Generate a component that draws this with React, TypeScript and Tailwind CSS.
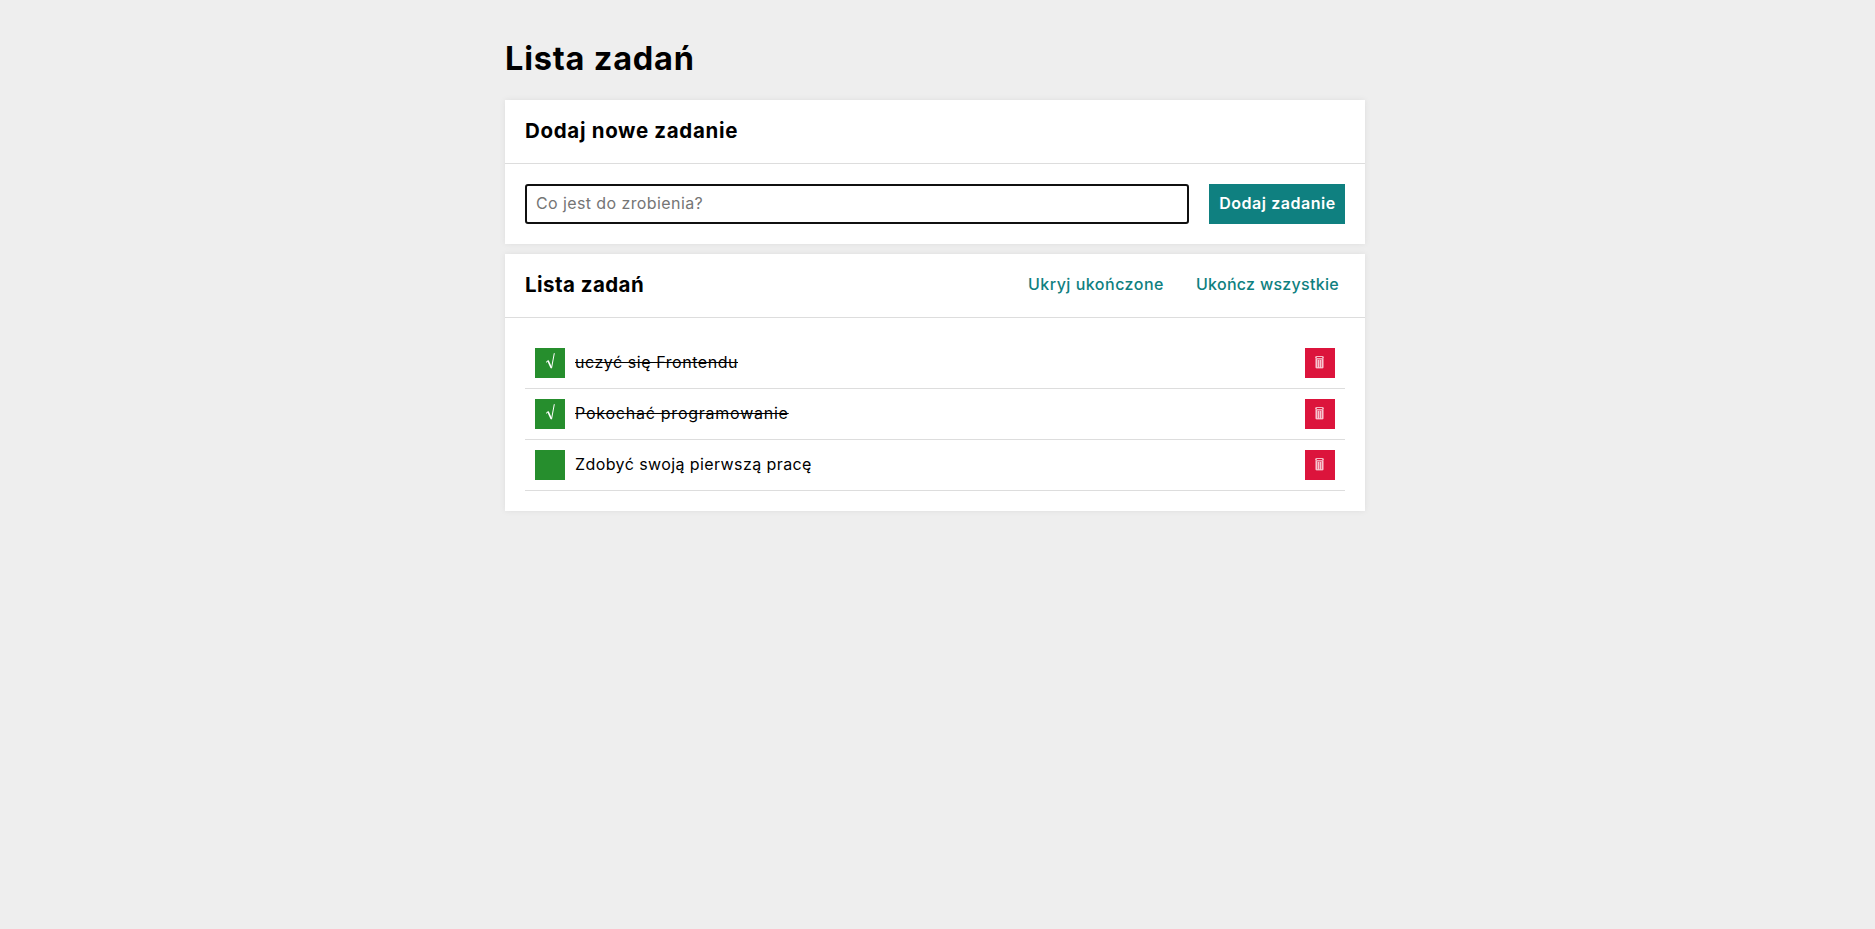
import React from "react";

type Task = { content: string; done: boolean; tracking: string };

const tasks: Task[] = [
  { content: "uczyć się Frontendu", done: true, tracking: "tracking-[0.55px]" },
  { content: "Pokochać programowanie", done: true, tracking: "tracking-[0.76px]" },
  { content: "Zdobyć swoją pierwszą pracę", done: false, tracking: "tracking-[0.41px]" },
];

function CheckIcon() {
  return (
    <svg width="30" height="30" viewBox="0 0 30 30" fill="none" stroke="#fff">
      <path d="M11 14.4 13.2 12.6" strokeWidth="1" />
      <path d="M13 12.6 16.3 19.8" strokeWidth="1.6" />
      <path d="M16.5 20.3 19.3 5.2" strokeWidth="1" />
    </svg>
  );
}

function BinIcon() {
  return (
    <svg width="30" height="30" viewBox="0 0 30 30">
      <path d="M11 8h7v1h-7z" fill="#f6b9c5" />
      <path d="M10 8.5h2v2h-2zM17 8.5h2v2h-2z" fill="#f3a3b3" />
      <path d="M11 10h7v1h-7z" fill="#fbdde3" />
      <path d="M10 10.5h9v9l-1.5 1.3h-6L10 19.5z" fill="#e9708a" />
      <path d="M11.5 11v9M13.5 12v8M15.5 12v8M17.5 11v9" stroke="#f9cfd7" strokeWidth="0.9" />
      <path d="M11 19.5h7" stroke="#f8c8d1" strokeWidth="0.8" />
    </svg>
  );
}

function Section({ title, titleClass, actions, children }: {
  title: string;
  titleClass: string;
  actions?: React.ReactNode;
  children: React.ReactNode;
}) {
  return (
    <section className="mb-2.5 bg-white shadow-[0_0_5px_#dddddd]">
      <header className="flex h-16 items-center justify-between border-b border-[#dddddd] px-5">
        <h2 className={`pb-0.5 text-[20.5px] leading-6 font-bold ${titleClass}`}>{title}</h2>
        {actions}
      </header>
      <div className="p-5">{children}</div>
    </section>
  );
}

export default function App() {
  return (
    <div className="min-h-screen bg-[#eeeeee] font-['Inter',sans-serif] text-base text-black">
      <main className="ml-[505px] w-[860px]">
        <h1 className="flex h-[100px] items-center pt-[18px] text-[32.5px] font-bold tracking-[0.79px]">Lista zadań</h1>

        <Section title="Dodaj nowe zadanie" titleClass="tracking-[0.68px]">
          <form className="flex gap-5" onSubmit={(e) => e.preventDefault()}>
            <input
              className="h-10 min-w-0 grow rounded-[3px] border-2 border-[#101010] px-[9px] pb-0.5 tracking-[0.4px] outline-none placeholder:text-[#757575]"
              placeholder="Co jest do zrobienia?"
            />
            <button className="h-10 w-[136px] bg-[#0f8080] pb-0.5 pl-px font-semibold tracking-[0.55px] whitespace-nowrap text-white">
              Dodaj zadanie
            </button>
          </form>
        </Section>

        <Section
          title="Lista zadań"
          titleClass="tracking-[0.45px]"
          actions={
            <div className="flex gap-5 pb-1 font-medium text-[#0f8080]">
              <button className="px-1.5 tracking-[0.5px]">Ukryj ukończone</button>
              <button className="px-1.5 tracking-[0.29px]">Ukończ wszystkie</button>
            </div>
          }
        >
          <ul>
            {tasks.map((task) => (
              <li key={task.content} className="flex items-center gap-2.5 border-b border-[#dddddd] p-2.5">
                <button className="size-[30px] bg-[#268e2d]">{task.done && <CheckIcon />}</button>
                <span className={`grow pb-0.5 leading-5 ${task.tracking} ${task.done ? "line-through" : ""}`}>
                  {task.content}
                </span>
                <button className="size-[30px] bg-[#dc143c]">
                  <BinIcon />
                </button>
              </li>
            ))}
          </ul>
        </Section>
      </main>
    </div>
  );
}
